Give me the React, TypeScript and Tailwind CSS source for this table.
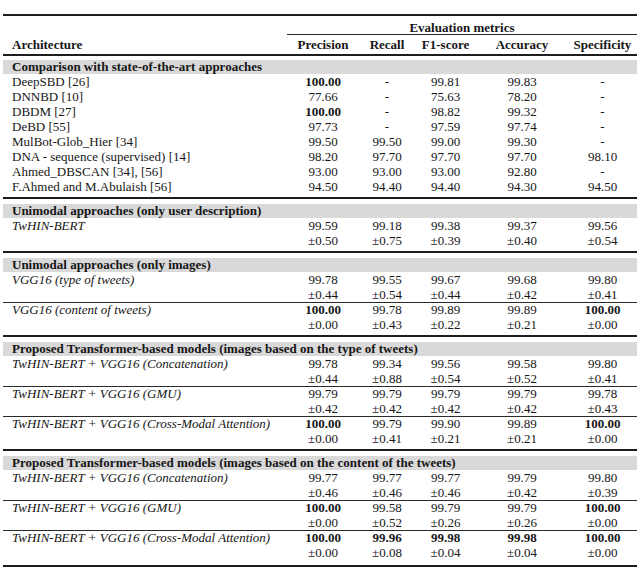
import React from "react";

type Cell = { v: string; sd?: string; b?: boolean };
type Model = { name: string; it?: boolean; cells: Cell[] };
type Section = { title: string; ruled: boolean; models: Model[] };

const cols = "grid grid-cols-[284px_72px_56px_61px_92px_69px]";

const c = (v: string, sd?: string, b?: boolean): Cell => ({ v, sd, b });
const d = c("-");

const sections: Section[] = [
	{
		title: "Comparison with state-of-the-art approaches",
		ruled: false,
		models: [
			{ name: "DeepSBD [26]", cells: [c("100.00", undefined, true), d, c("99.81"), c("99.83"), d] },
			{ name: "DNNBD [10]", cells: [c("77.66"), d, c("75.63"), c("78.20"), d] },
			{ name: "DBDM [27]", cells: [c("100.00", undefined, true), d, c("98.82"), c("99.32"), d] },
			{ name: "DeBD [55]", cells: [c("97.73"), d, c("97.59"), c("97.74"), d] },
			{ name: "MulBot-Glob_Hier [34]", cells: [c("99.50"), c("99.50"), c("99.00"), c("99.30"), d] },
			{ name: "DNA - sequence (supervised) [14]", cells: [c("98.20"), c("97.70"), c("97.70"), c("97.70"), c("98.10")] },
			{ name: "Ahmed_DBSCAN [34], [56]", cells: [c("93.00"), c("93.00"), c("93.00"), c("92.80"), d] },
			{ name: "F.Ahmed and M.Abulaish [56]", cells: [c("94.50"), c("94.40"), c("94.40"), c("94.30"), c("94.50")] },
		],
	},
	{
		title: "Unimodal approaches (only user description)",
		ruled: true,
		models: [
			{ name: "TwHIN-BERT", it: true, cells: [c("99.59", "0.50"), c("99.18", "0.75"), c("99.38", "0.39"), c("99.37", "0.40"), c("99.56", "0.54")] },
		],
	},
	{
		title: "Unimodal approaches (only images)",
		ruled: true,
		models: [
			{ name: "VGG16 (type of tweets)", it: true, cells: [c("99.78", "0.44"), c("99.55", "0.54"), c("99.67", "0.44"), c("99.68", "0.42"), c("99.80", "0.41")] },
			{ name: "VGG16 (content of tweets)", it: true, cells: [c("100.00", "0.00", true), c("99.78", "0.43"), c("99.89", "0.22"), c("99.89", "0.21"), c("100.00", "0.00", true)] },
		],
	},
	{
		title: "Proposed Transformer-based models (images based on the type of tweets)",
		ruled: true,
		models: [
			{ name: "TwHIN-BERT + VGG16 (Concatenation)", it: true, cells: [c("99.78", "0.44"), c("99.34", "0.88"), c("99.56", "0.54"), c("99.58", "0.52"), c("99.80", "0.41")] },
			{ name: "TwHIN-BERT + VGG16 (GMU)", it: true, cells: [c("99.79", "0.42"), c("99.79", "0.42"), c("99.79", "0.42"), c("99.79", "0.42"), c("99.78", "0.43")] },
			{ name: "TwHIN-BERT + VGG16 (Cross-Modal Attention)", it: true, cells: [c("100.00", "0.00", true), c("99.79", "0.41"), c("99.90", "0.21"), c("99.89", "0.21"), c("100.00", "0.00", true)] },
		],
	},
	{
		title: "Proposed Transformer-based models (images based on the content of the tweets)",
		ruled: true,
		models: [
			{ name: "TwHIN-BERT + VGG16 (Concatenation)", it: true, cells: [c("99.77", "0.46"), c("99.77", "0.46"), c("99.77", "0.46"), c("99.79", "0.42"), c("99.80", "0.39")] },
			{ name: "TwHIN-BERT + VGG16 (GMU)", it: true, cells: [c("100.00", "0.00", true), c("99.58", "0.52"), c("99.79", "0.26"), c("99.79", "0.26"), c("100.00", "0.00", true)] },
			{ name: "TwHIN-BERT + VGG16 (Cross-Modal Attention)", it: true, cells: [c("100.00", "0.00", true), c("99.96", "0.08", true), c("99.98", "0.04", true), c("99.98", "0.04", true), c("100.00", "0.00", true)] },
		],
	},
];

function ModelRows({ m }: { m: Model }) {
	const hasSd = m.cells.some((x) => x.sd);
	return (
		<div>
			<div className={`${cols} h-[15px] leading-[15px]`}>
				<div className={`pl-[9px] whitespace-nowrap ${m.it ? "italic" : ""}`}>{m.name}</div>
				{m.cells.map((x, i) => (
					<div key={i} className={`text-center ${x.b ? "font-bold" : ""}`}>{x.v}</div>
				))}
			</div>
			{hasSd && (
				<div className={`${cols} h-[15px] leading-[15px]`}>
					<div />
					{m.cells.map((x, i) => (
						<div key={i} className="text-center">±{x.sd}</div>
					))}
				</div>
			)}
		</div>
	);
}

function SectionBlock({ s, last }: { s: Section; last: boolean }) {
	return (
		<div>
			<div className="h-[14px] leading-[14px] bg-[#d9d9d9] pl-[9px] font-bold whitespace-nowrap">{s.title}</div>
			{s.models.map((m, i) => (
				<div key={i}>
					{s.ruled && i > 0 && <div className="relative z-10 h-px -mb-px bg-[#2a2a2a]" />}
					<ModelRows m={m} />
				</div>
			))}
			<div className={last ? "h-[5px]" : "h-[3px]"} />
			<div className="h-[2px] bg-[#1e1e1e]" />
			{!last && <div className="h-[5px]" />}
		</div>
	);
}

export default function App() {
	return (
		<div
			className="w-[640px] h-[569px] bg-white overflow-hidden text-[13px] text-[#161616]"
			style={{ fontFamily: '"Liberation Serif", "Times New Roman", serif' }}
		>
			<div className="h-[14px]" />
			<div className="ml-[3px] w-[634px]">
				<div className="h-[2px] bg-[#1e1e1e]" />
				<div className={`${cols} h-[18px] pt-[4px] leading-[15px] font-bold`}>
					<div />
					<div className="col-span-5 text-center">Evaluation metrics</div>
				</div>
				<div className={cols}>
					<div />
					<div className="col-span-5 h-px bg-[#2a2a2a]" />
				</div>
				<div className={`${cols} h-[19px] pt-[2px] leading-[15px] font-bold`}>
					<div className="pl-[9px]">Architecture</div>
					<div className="text-center">Precision</div>
					<div className="text-center">Recall</div>
					<div className="text-center">F1-score</div>
					<div className="text-center">Accuracy</div>
					<div className="text-center">Specificity</div>
				</div>
				<div className="h-[2px] bg-[#1e1e1e]" />
				<div className="h-[4px]" />
				{sections.map((s, i) => (
					<SectionBlock key={i} s={s} last={i === sections.length - 1} />
				))}
			</div>
		</div>
	);
}
